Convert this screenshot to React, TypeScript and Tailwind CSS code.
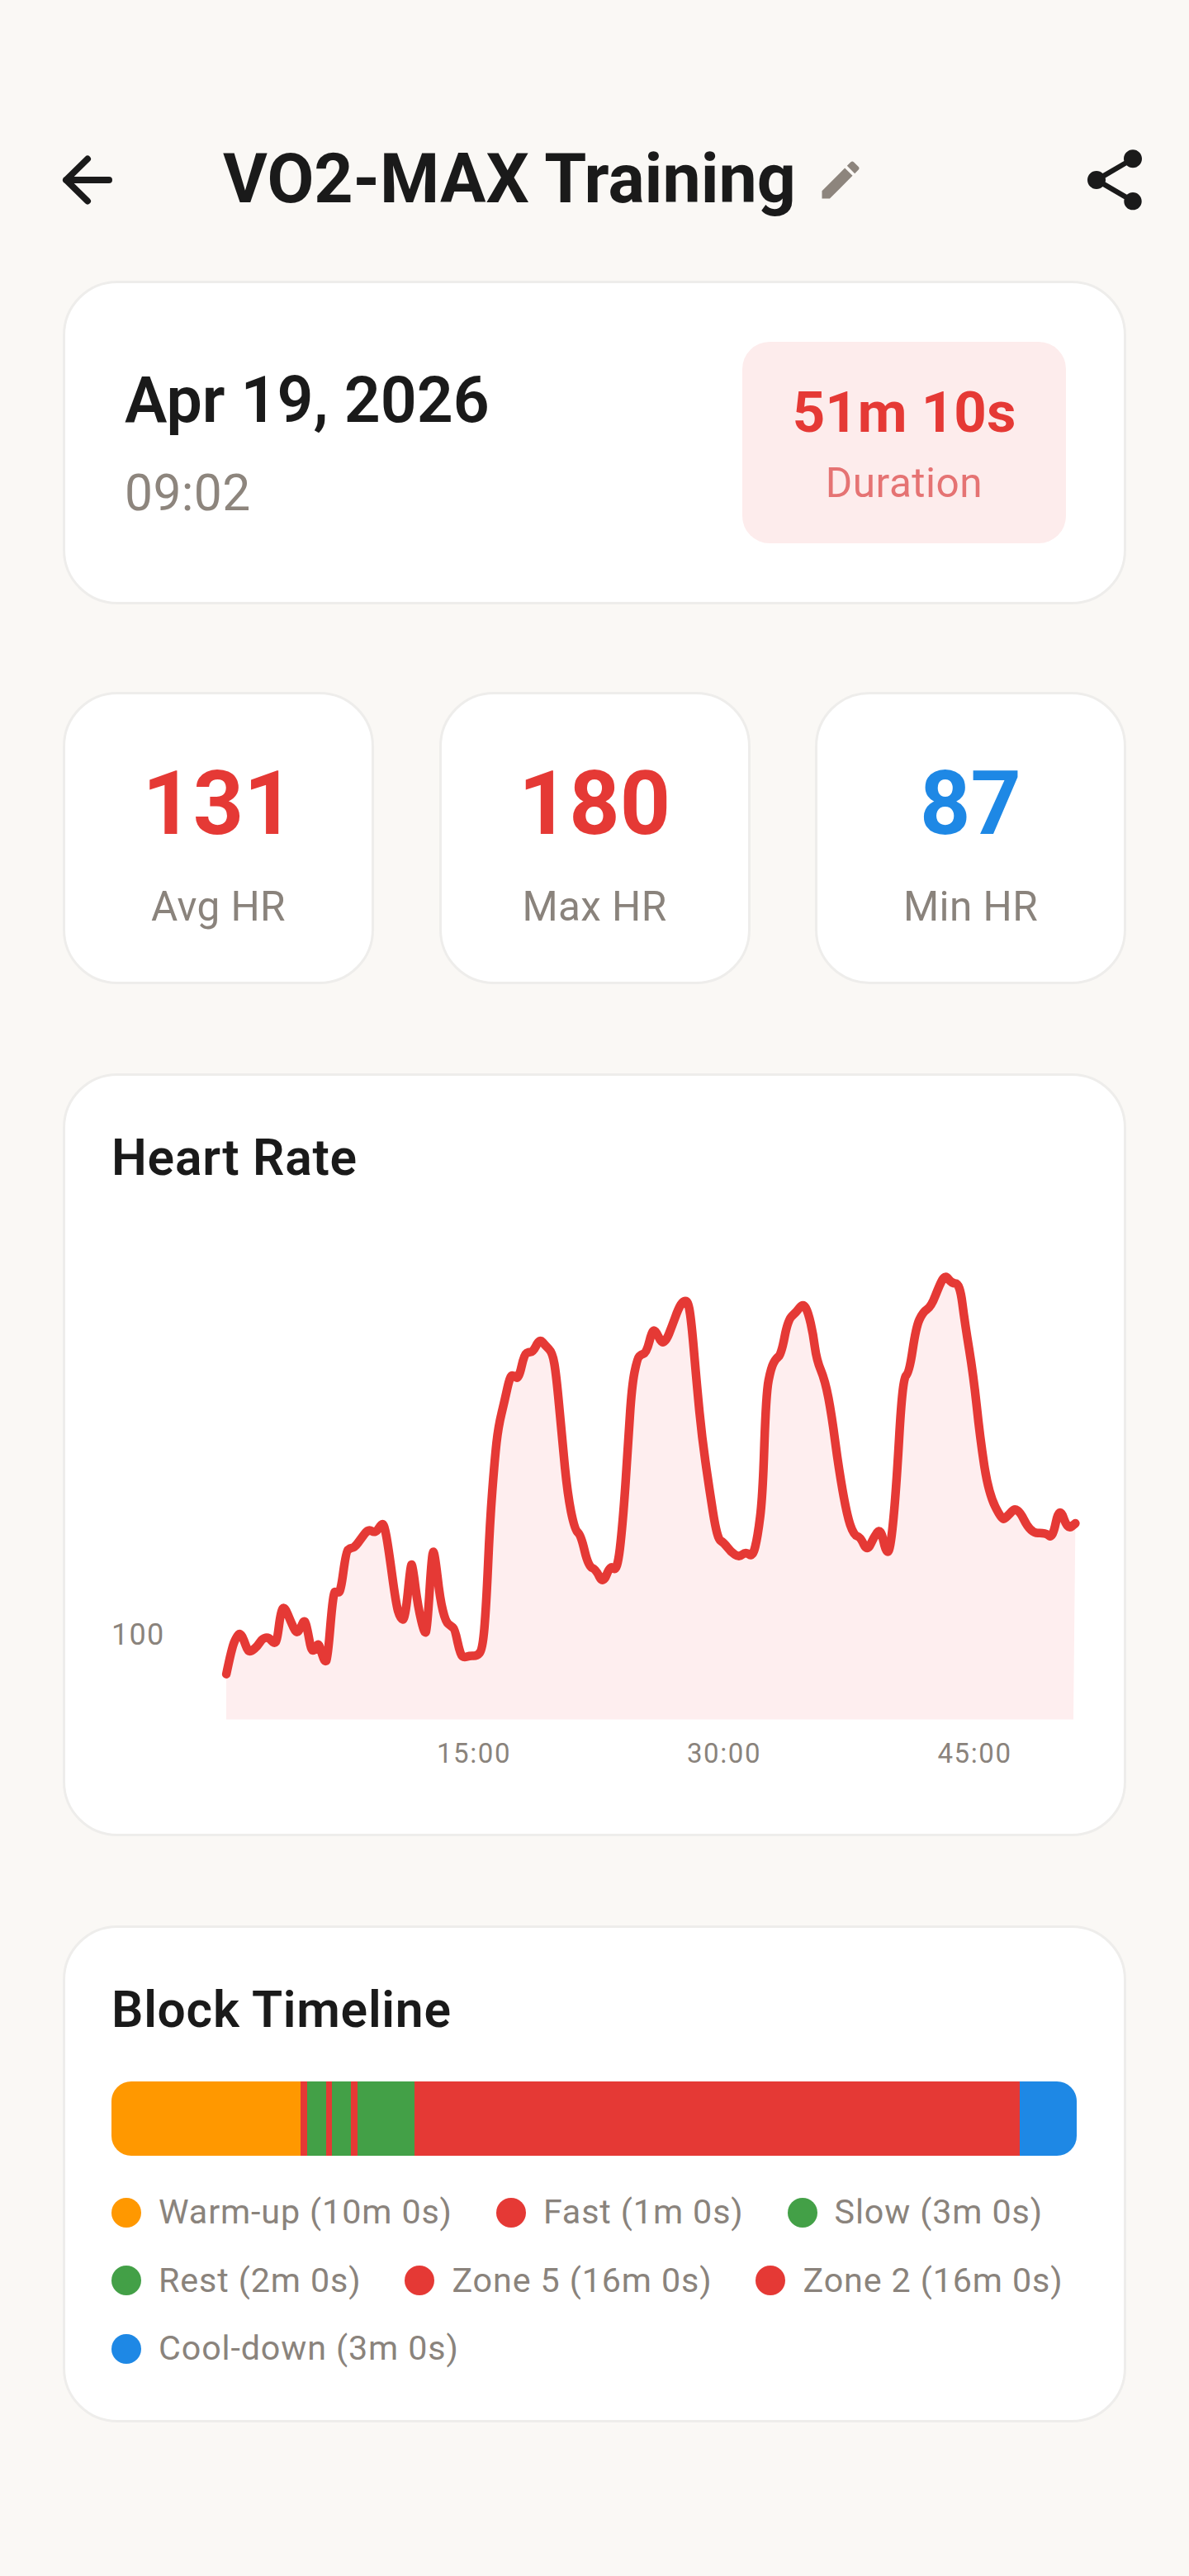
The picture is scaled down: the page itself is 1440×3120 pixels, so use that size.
import React from "react";

const A: [number, number][] = [[390,1182],[405,1110],[418,1080],[428,1070],[438,1090],[448,1120],[458,1120],[475,1105],[488,1085],[505,1082],[520,1100],[528,1090],[538,1010],[548,998],[565,1040],[580,1072],[590,1060],[602,1032],[610,1060],[620,1118],[630,1118],[640,1095],[650,1130],[658,1150],[665,1140],[680,958],[690,960],[700,960],[715,850],[725,840],[738,838],[755,815],[775,788],[795,800],[810,775],[818,775],[830,840],[850,990],[862,1032],[875,1035],[890,885],[895,885],[910,1000],[928,1075],[935,1060],[948,850],[955,850],[970,980],[985,1040],[1000,1052],[1010,1060],[1025,1130],[1035,1137],[1050,1132],[1070,1133],[1085,1115],[1095,1000],[1105,770],[1118,600],[1128,510],[1145,440],[1160,372],[1170,372],[1183,382],[1198,315],[1210,308],[1222,308],[1240,272],[1255,290],[1275,310],[1285,370],[1300,530],[1315,690],[1335,790],[1352,805],[1372,890],[1392,897],[1412,938],[1432,885],[1450,905],[1465,780],[1480,560],[1490,400],[1505,325],[1515,315],[1530,310],[1545,250],[1555,250]];
const B: [number, number][] = [[150,285],[165,275],[180,240],[200,190],[215,168],[230,172],[240,240],[255,400],[270,540],[290,670],[315,815],[335,825],[355,850],[380,865],[400,850],[420,865],[435,810],[450,700],[460,420],[475,350],[490,325],[505,315],[525,220],[550,200],[570,175],[585,200],[600,260],[610,330],[635,385],[655,480],[675,620],[700,750],[720,805],[740,810],[760,850],[780,810],[800,785],[815,850],[828,850],[845,700],[865,380],[885,365],[905,240],[925,200],[950,185],[975,125],[992,98],[1010,122],[1035,122],[1050,230],[1075,370],[1095,540],[1120,690],[1160,765],[1175,755],[1205,725],[1245,800],[1290,798],[1310,815],[1330,725],[1355,790],[1378,773]];

const pts: [number, number][] = [
  ...A.map(([x, y]): [number, number] => [100 + x / 2.24 - 135, 1500 + y / 2.24 - 1480]),
  ...B.map(([x, y]): [number, number] => [740 + x / 2.45 - 135, 1500 + y / 2.24 - 1480]),
];

function smooth(p: [number, number][]) {
  let d = `M${p[0][0].toFixed(1)} ${p[0][1].toFixed(1)}`;
  for (let i = 1; i < p.length - 1; i++) {
    const mx = (p[i][0] + p[i + 1][0]) / 2;
    const my = (p[i][1] + p[i + 1][1]) / 2;
    d += ` Q${p[i][0].toFixed(1)} ${p[i][1].toFixed(1)} ${mx.toFixed(1)} ${my.toFixed(1)}`;
  }
  const l = p[p.length - 1];
  d += ` L${l[0].toFixed(1)} ${l[1].toFixed(1)}`;
  return d;
}
const line = smooth(pts);
const area = `${line} L1165 602.6 L139 602.6 Z`;

function Stat({ value, label, color }: { value: string; label: string; color: string }) {
  return (
    <div className="w-[377px] h-[354px] bg-white rounded-[66px] border-[3px] border-[#eeedeb] flex flex-col items-center">
      <div className={`mt-[70px] text-[107px] leading-[125px] font-bold ${color}`}>{value}</div>
      <div className="mt-[33px] text-[49.5px] leading-[58px] tracking-[0.4px] text-[#8a837c]">{label}</div>
    </div>
  );
}

function Legend({ dot, label }: { dot: string; label: string }) {
  return (
    <div className="flex items-center h-[45px]">
      <span className={`w-[36px] h-[36px] rounded-full ${dot}`} />
      <span className="ml-[21px] text-[41.25px] leading-[45px] tracking-[0.88px] text-[#8a837c] whitespace-nowrap">{label}</span>
    </div>
  );
}

export default function App() {
  return (
    <div className="w-[1440px] h-[3120px] bg-[#faf8f5] font-['Roboto',sans-serif] overflow-hidden">
      <header className="flex items-center h-[88px] mt-[174px] pl-[65px] pr-[46px] pt-0">
        <svg width="88" height="88" viewBox="0 0 88 88" fill="none" stroke="#1a1a1a" strokeWidth="8" strokeLinecap="round" strokeLinejoin="round" className="shrink-0">
          <path d="M15 44H67M41 18.5L15 44L41 69.5" />
        </svg>
        <h1 className="ml-[117px] -mt-[4px] text-[82.5px] leading-[97px] font-bold text-[#1a1a1a] whitespace-nowrap">VO2-MAX Training</h1>
        <svg width="60" height="60" viewBox="0 0 24 24" fill="#8d857d" className="ml-[24px] shrink-0">
          <path d="M3 17.25V21h3.75L17.81 9.94l-3.75-3.75L3 17.25zM20.71 7.04c.39-.39.39-1.02 0-1.41l-2.34-2.34c-.39-.39-1.02-.39-1.41 0l-1.83 1.83 3.75 3.75 1.83-1.83z" />
        </svg>
        <svg width="88" height="88" viewBox="0 0 24 24" fill="#1a1a1a" className="ml-auto shrink-0">
          <path d="M18 16.08c-.76 0-1.44.3-1.96.77L8.91 12.7c.05-.23.09-.46.09-.7s-.04-.47-.09-.7l7.05-4.11c.54.5 1.25.81 2.04.81 1.66 0 3-1.34 3-3s-1.34-3-3-3-3 1.34-3 3c0 .24.04.47.09.7L8.04 9.81C7.5 9.31 6.79 9 6 9c-1.66 0-3 1.34-3 3s1.34 3 3 3c.79 0 1.5-.31 2.04-.81l7.12 4.16c-.05.21-.08.43-.08.65 0 1.61 1.31 2.92 2.92 2.92 1.61 0 2.92-1.31 2.92-2.92s-1.31-2.92-2.92-2.92z" />
        </svg>
      </header>

      <main className="mx-[76px] w-[1288px] mt-[78px] flex flex-col">
        <section className="h-[392px] bg-white rounded-[66px] border-[3px] border-[#eeedeb] flex items-center justify-between pl-[72px] pr-[70px]">
          <div className="flex flex-col">
            <div className="text-[77px] leading-[90px] font-semibold text-[#1a1a1a] whitespace-nowrap">Apr 19, 2026</div>
            <div className="mt-[32px] text-[60.5px] leading-[71px] tracking-[0.4px] text-[#8d857d]">09:02</div>
          </div>
          <div className="w-[392px] h-[244px] rounded-[33px] bg-[#fdecec] flex flex-col items-center justify-center">
            <div className="text-[69px] leading-[81px] font-bold text-[#e53935] whitespace-nowrap">51m 10s</div>
            <div className="mt-[16px] text-[49.5px] leading-[58px] tracking-[0.5px] text-[#e57373]">Duration</div>
          </div>
        </section>

        <section className="mt-[106px] flex justify-between">
          <Stat value="131" label="Avg HR" color="text-[#e53935]" />
          <Stat value="180" label="Max HR" color="text-[#e53935]" />
          <Stat value="87" label="Min HR" color="text-[#1e88e5]" />
        </section>

        <section className="mt-[108px] h-[924px] bg-white rounded-[66px] border-[3px] border-[#eeedeb] pl-[56px] pt-[64px]">
          <h2 className="text-[60.5px] leading-[71px] font-semibold tracking-[0.75px] text-[#1a1a1a]">Heart Rate</h2>
          <svg width="1169" height="680" viewBox="0 0 1169 680" className="block mt-[42px] overflow-visible">
            <path d={area} fill="#feeeef" />
            <path d={line} fill="none" stroke="#e53935" strokeWidth="10.5" strokeLinecap="round" strokeLinejoin="round" />
            <text x="0" y="512" fontSize="36" letterSpacing="1.3" fill="#8a837c">100</text>
            <text x="439" y="655" fontSize="33" letterSpacing="1.6" fill="#8a837c" textAnchor="middle">15:00</text>
            <text x="742" y="655" fontSize="33" letterSpacing="1.6" fill="#8a837c" textAnchor="middle">30:00</text>
            <text x="1045.5" y="655" fontSize="33" letterSpacing="1.6" fill="#8a837c" textAnchor="middle">45:00</text>
          </svg>
        </section>

        <section className="mt-[108px] h-[602px] bg-white rounded-[66px] border-[3px] border-[#eeedeb] pl-[56px] pr-[56px] pt-[64px]">
          <h2 className="text-[60.5px] leading-[71px] font-semibold tracking-[0.75px] text-[#1a1a1a]">Block Timeline</h2>
          <div className="mt-[51px] h-[90px] w-[1169px] rounded-[24px] overflow-hidden flex">
            <div className="grow-[600] basis-0 bg-[#ff9800]" />
            <div className="grow-[20] basis-0 bg-[#e53935]" />
            <div className="grow-[60] basis-0 bg-[#43a047]" />
            <div className="grow-[20] basis-0 bg-[#e53935]" />
            <div className="grow-[60] basis-0 bg-[#43a047]" />
            <div className="grow-[20] basis-0 bg-[#e53935]" />
            <div className="grow-[180] basis-0 bg-[#43a047]" />
            <div className="grow-[1920] basis-0 bg-[#e53935]" />
            <div className="grow-[180] basis-0 bg-[#1e88e5]" />
          </div>
          <div className="mt-[46px] flex flex-wrap gap-x-[53px] gap-y-[37.5px] w-[1180px]">
            <Legend dot="bg-[#ff9800]" label="Warm-up (10m 0s)" />
            <Legend dot="bg-[#e53935]" label="Fast (1m 0s)" />
            <Legend dot="bg-[#43a047]" label="Slow (3m 0s)" />
            <Legend dot="bg-[#43a047]" label="Rest (2m 0s)" />
            <Legend dot="bg-[#e53935]" label="Zone 5 (16m 0s)" />
            <Legend dot="bg-[#e53935]" label="Zone 2 (16m 0s)" />
            <Legend dot="bg-[#1e88e5]" label="Cool-down (3m 0s)" />
          </div>
        </section>
      </main>
    </div>
  );
}
